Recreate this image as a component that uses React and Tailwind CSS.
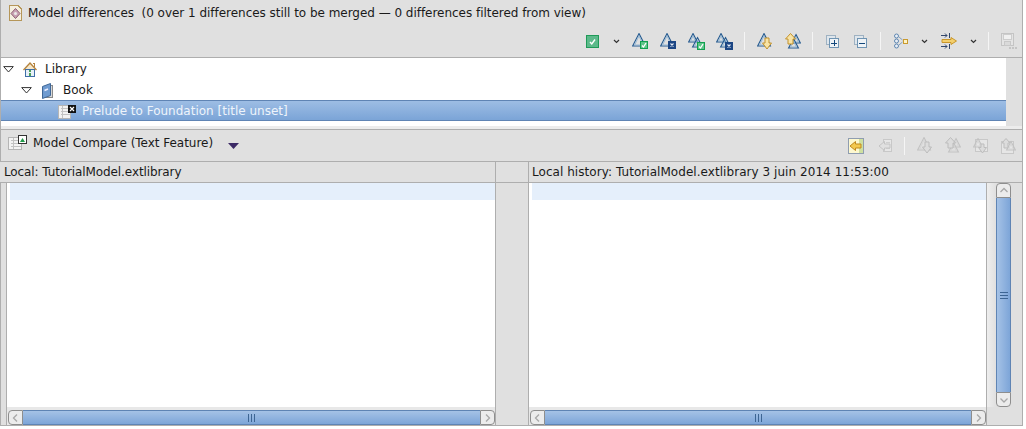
import React from "react";

const Svg = ({ w = 16, h = 16, children, className = "" }) => (
  <svg width={w} height={h} viewBox={`0 0 ${w} ${h}`} className={`shrink-0 block ${className}`} shapeRendering="crispEdges">{children}</svg>
);

const Tri = ({ x = 0, y = 0, s = 13, c = "#23598f", inner = "#8fb4d4" }) => {
  const h = s - 1;
  return (
    <g shapeRendering="auto" fill="none">
      <path d={`M${x + s / 2} ${y + 0.6}L${x + s - 0.6} ${y + h}H${x + 0.6}Z`} stroke={c} strokeWidth="1.1" />
      <path d={`M${x + s / 2} ${y + 3}L${x + s - 2.6} ${y + h - 1}H${x + 2.6}Z`} stroke={inner} strokeWidth="0.9" />
    </g>
  );
};
const Check = ({ x, y }) => (
  <g>
    <rect x={x + 0.5} y={y + 0.5} width="7" height="7" fill="#5fc48a" stroke="#12a150" />
    <path d={`M${x + 2} ${y + 4.5}l1.500 1.500 2.500-4`} fill="none" stroke="#fff" strokeWidth="1.300" shapeRendering="auto" />
  </g>
);
const Cross = ({ x, y }) => (
  <g>
    <rect x={x} y={y} width="8" height="8" fill="#1c4684" />
    <path d={`M${x + 2.500} ${y + 2.500}l3 3m0-3l-3 3`} fill="none" stroke="#e8eef8" strokeWidth="1.100" shapeRendering="auto" />
  </g>
);
const Chevron = () => (
  <Svg w={7} h={5}><path d="M1 1L3.500 3.500L6 1" fill="none" stroke="#333" strokeWidth="1.200" shapeRendering="auto" /></Svg>
);
const Sep = () => <div className="w-px h-[18px] bg-[#f5f5f5] shrink-0" />;

const CheckAll = () => (
  <Svg w={13} h={13}>
    <rect x=".5" y=".5" width="12" height="12" fill="#5cb98a" stroke="#1f9a58" />
    <path d="M4 7l1.800 2L9 4.500" fill="none" stroke="#fff" strokeWidth="1.400" shapeRendering="auto" />
  </Svg>
);
const OneCheck = () => <Svg w={17} h={17}><Tri x={0} y={0} s={14} /><Check x={8} y={8} /></Svg>;
const OneCross = () => <Svg w={17} h={17}><Tri x={0} y={0} s={14} /><Cross x={8} y={8} /></Svg>;
const TwoCheck = () => <Svg w={17} h={17}><Tri x={0} y={0} s={10} /><Tri x={4} y={4} s={11} /><Check x={9} y={9} /></Svg>;
const TwoCross = () => <Svg w={17} h={17}><Tri x={0} y={0} s={10} /><Tri x={4} y={4} s={11} /><Cross x={9} y={9} /></Svg>;

const Arrow = ({ gray, up }) => (
  <path
    d={up ? "M5.500 .5L10.500 6H8v5H3V6H.5Z" : "M8 5h4v5h2.500L10 16 5.500 10H8Z"}
    fill={gray ? "#dcdcdc" : "#f7e3a6"}
    stroke={gray ? "#bcbcbc" : "#c4922a"}
    shapeRendering="auto"
  />
);
const Down = ({ gray }) => (
  <Svg w={16} h={17}>
    {gray ? <Tri x={0} y={0} s={14} c="#c2c2c2" inner="#d4d4d4" /> : <Tri x={0} y={0} s={14} />}
    <Arrow gray={gray} />
  </Svg>
);
const Up = ({ gray }) => {
  const c = gray ? "#c2c2c2" : "#23598f";
  const i = gray ? "#d4d4d4" : "#8fb4d4";
  return (
    <Svg w={16} h={17}>
      <Tri x={6} y={1} s={10} c={c} inner={i} />
      <Tri x={3} y={5} s={11} c={c} inner={i} />
      <Arrow gray={gray} up />
    </Svg>
  );
};
const Expand = ({ minus }) => (
  <Svg w={13} h={13}>
    <rect x=".5" y=".5" width="9" height="9" fill="#dfe6ec" stroke="#9fb2c2" />
    <rect x="3.500" y="3.500" width="9" height="9" fill="#eef3f7" stroke="#6f94b3" />
    {!minus && <rect x="7.500" y="5" width="1" height="6" fill="#13487c" />}
    <rect x="5" y="7.500" width="6" height="1" fill="#13487c" />
  </Svg>
);
const Tree = () => (
  <Svg w={14} h={16}>
    <g fill="#e8eef5" stroke="#5f86b0" shapeRendering="auto">
      <circle cx="2.500" cy="3" r="2" /><circle cx="2.500" cy="8" r="2" /><circle cx="2.500" cy="13" r="2" />
    </g>
    <path d="M5 4L8.500 7M5 12L8.500 9" stroke="#7f9fc0" fill="none" shapeRendering="auto" />
    <rect x="9.500" y="6.500" width="3.500" height="3.500" fill="#fff3c4" stroke="#c99a2e" />
  </Svg>
);
const Merge = () => (
  <Svg w={16} h={16}>
    <path d="M0 2.500h6M4 .5l2 2-2 2M8.500 0v5M0 13.500h6M4 11.500l2 2-2 2M8.500 11v5" stroke="#33476b" fill="none" shapeRendering="auto" />
    <path d="M1 6.500h9V4.500L15.500 8 10 11.500v-2H1Z" fill="#f3cf6d" stroke="#c9962a" shapeRendering="auto" />
  </Svg>
);
const Save = () => (
  <Svg w={16} h={16}>
    <rect x=".5" y=".5" width="12" height="12" fill="#e4e4e4" stroke="#c4c4c4" />
    <rect x="2.500" y="1.500" width="8" height="5" fill="#f0f0f0" stroke="#cdcdcd" />
    <rect x="3.500" y="8.500" width="6" height="4" fill="#dadada" stroke="#c8c8c8" />
    <path d="M8 14h2v1.500H8zM11 14h2v1.500h-2zM14 14h2v1.500h-2z" fill="#c4c4c4" />
  </Svg>
);
const CopyLeft = ({ gray }) => (
  <Svg w={gray ? 15 : 16} h={16}>
    {!gray && <rect x=".5" y=".5" width="15" height="15" fill="#fdf8d0" stroke="#8f9db0" />}
    {!gray && <rect x="11" y="1" width="4" height="14" fill="#cfe0a0" />}
    {gray && <rect x="6.500" y="1.500" width="8" height="12" fill="#e6e6e6" stroke="#c8c8c8" />}
    {gray && <path d="M9 4.500h4M9 7.500h4M9 10.500h4" stroke="#cfcfcf" />}
    <path d="M2 8L7.500 3.500V6H13v4H7.500v2.500Z" fill={gray ? "#e0e0e0" : "#f3c94f"} stroke={gray ? "#c4c4c4" : "#c08a1e"} shapeRendering="auto" />
  </Svg>
);
const DocDown = () => (
  <Svg w={15} h={16}>
    <rect x="2.500" y="1.500" width="12" height="12" fill="#e6e6e6" stroke="#c8c8c8" />
    <Tri x={0} y={0} s={10} c="#c2c2c2" inner="#d4d4d4" />
    <path d="M8 6h3v3.500h2.500L9.500 15 5.500 9.500H8Z" fill="#dcdcdc" stroke="#bdbdbd" shapeRendering="auto" />
  </Svg>
);
const DocUp = () => (
  <Svg w={15} h={16}>
    <rect x=".5" y="3.500" width="12" height="12" fill="#e6e6e6" stroke="#c8c8c8" />
    <Tri x={5} y={3} s={10} c="#c2c2c2" inner="#d4d4d4" />
    <path d="M5 .5L9 5H7v5H3V5H1Z" fill="#dcdcdc" stroke="#bdbdbd" shapeRendering="auto" />
  </Svg>
);
const ModelIcon = () => (
  <Svg w={13} h={16}>
    <path d="M.5.5H9L12.500 4V15.500H.5Z" fill="#f5efdf" stroke="#b59659" />
    <path d="M6.500 3.500L11 8.500 6.500 13.500 2 8.500Z" fill="#c9a0b4" stroke="#8d6070" shapeRendering="auto" />
    <circle cx="6.500" cy="8.500" r="1.500" fill="#ecebe6" shapeRendering="auto" />
  </Svg>
);
const HomeIcon = () => (
  <Svg w={14} h={15}>
    <path d="M.5 8L7 1 13.500 8" fill="#f6e7c8" stroke="#b5843f" strokeWidth="1.300" shapeRendering="auto" />
    <path d="M10 1.500h1.500v3" fill="none" stroke="#b5843f" />
    <rect x="2.500" y="7.500" width="9" height="7" fill="#e7f0f8" stroke="#3f6fa8" />
    <rect x="6" y="8" width="2" height="2" fill="#4aa05a" />
    <rect x="6" y="11" width="2" height="3" fill="#4aa05a" />
  </Svg>
);
const BookIcon = () => (
  <Svg w={12} h={16}>
    <path d="M9.500 2.500h2V14.500H3" fill="#d8d8d8" stroke="#8a8a8a" />
    <path d="M1.500 3.500L9.500 .5V12.500L1.500 15.500Z" fill="#6f9bd0" stroke="#3f6797" shapeRendering="auto" />
    <path d="M3.500 7.500L7 6" stroke="#eef" strokeWidth="1.500" shapeRendering="auto" />
  </Svg>
);
const AttrIcon = () => (
  <Svg w={19} h={15}>
    <rect x=".5" y="1.500" width="12" height="13" fill="#f2f2f2" stroke="#b5b5b5" />
    <path d="M3 4.500h9M3 7.500h9M3 10.500h9M4.500 2v12" stroke="#c2c2c2" />
    <rect x="10" y="1" width="8" height="8" fill="#111" />
    <path d="M12 3l4 4m0-4l-4 4" stroke="#fff" strokeWidth="1.200" shapeRendering="auto" />
  </Svg>
);
const CompareIcon = () => (
  <Svg w={19} h={15}>
    <rect x=".5" y="2.500" width="13" height="12" fill="#f2f2f2" stroke="#b5b5b5" />
    <path d="M3 5.500h10M3 8.500h10M3 11.500h10M5.500 3v11" stroke="#c2c2c2" />
    <rect x="10.500" y=".5" width="8" height="8" fill="#fff" stroke="#333" />
    <path d="M12 7l2.500-4L17 7Z" fill="#1f9a48" shapeRendering="auto" />
  </Svg>
);

const Twist = () => (
  <Svg w={11} h={7}><path d="M.7.6H10.300L5.500 6Z" fill="#fff" stroke="#333" shapeRendering="auto" /></Svg>
);

const TreeRow = ({ indent, twist, icon, label, selected }) => (
  <div className={`flex items-center pt-[2px] ${indent} ${selected ? "h-[21px] text-[#eef4fb] bg-linear-to-b from-[#9dbde4] to-[#7ba4d7] border-y border-[#5f84b4]" : "h-[21px] text-[#1a1a1a]"}`}>
    {twist && <Twist />}
    {icon}
    <span className="whitespace-pre">{label}</span>
  </div>
);

const ThumbGrip = ({ vertical }) => {
  const bar = vertical ? "h-px w-[8px] bg-[#3d6593]" : "w-px h-[8px] bg-[#3d6593]";
  return (
    <div className={`flex gap-[2px] ${vertical ? "flex-col" : ""}`}>
      <div className={bar} /><div className={bar} /><div className={bar} />
    </div>
  );
};

const ArrowBtn = ({ dir }) => {
  const d = { left: "M6 1.500L2.500 5 6 8.500", right: "M3 1.500L6.500 5 3 8.500", up: "M1.500 6L5 2.500 8.500 6", down: "M1.500 3.500L5 7 8.500 3.500" }[dir];
  const cls = {
    left: "w-[15px] h-[15px] rounded-l-[4px] border",
    right: "w-[15px] h-[15px] rounded-r-[4px] border",
    up: "w-[15px] h-[15px] rounded-t-[4px] border",
    down: "w-[15px] h-[15px] rounded-b-[4px] border",
  }[dir];
  return (
    <div className={`${cls} border-[#8e8e8e] bg-[#ececec] flex items-center justify-center shrink-0`}>
      <svg width="9" height="10" viewBox="0 0 9 10" className="block"><path d={d} fill="none" stroke="#a8a8a8" strokeWidth="1.300" /></svg>
    </div>
  );
};

const HScroll = () => (
  <div className="h-[18px] bg-[#e8e8e8] pt-[3px] pl-px shrink-0">
    <div className="flex h-[15px]">
      <ArrowBtn dir="left" />
      <div className="flex-1 h-[15px] bg-linear-to-b from-[#a5c2e6] to-[#7da5d8] border-y border-[#5f84b4] flex items-center justify-center">
        <ThumbGrip />
      </div>
      <ArrowBtn dir="right" />
    </div>
  </div>
);

export default function App() {
  return (
    <div className="w-[1026px] h-[429px] bg-white overflow-hidden text-[12px] leading-[15px] font-['DejaVu_Sans',sans-serif] text-[#1a1a1a]">
      <div className="w-[1023px] h-[426px] bg-[#e0e0e0] flex flex-col border-b border-[#aeaeae]">
        {/* Top panel */}
        <div className="h-[58px] bg-[#e0e0e0] border-b border-x border-[#aeaeae] flex flex-col shrink-0">
          <div className="h-[26px] flex items-center pl-[8px] gap-[6px]">
            <ModelIcon />
            <span className="whitespace-pre tracking-[-0.03px]">Model differences  (0 over 1 differences still to be merged — 0 differences filtered from view)</span>
          </div>
          <div className="h-[31px] flex items-center pl-[585px] pb-[1px]">
            <CheckAll />
            <div className="ml-[14px]"><Chevron /></div>
            <div className="ml-[12px]"><OneCheck /></div>
            <div className="ml-[11px]"><OneCross /></div>
            <div className="ml-[11px]"><TwoCheck /></div>
            <div className="ml-[11px]"><TwoCross /></div>
            <div className="ml-[11px]"><Sep /></div>
            <div className="ml-[12px]"><Down /></div>
            <div className="ml-[12px]"><Up /></div>
            <div className="ml-[11px]"><Sep /></div>
            <div className="ml-[13px]"><Expand /></div>
            <div className="ml-[15px]"><Expand minus /></div>
            <div className="ml-[13px]"><Sep /></div>
            <div className="ml-[13px]"><Tree /></div>
            <div className="ml-[13px]"><Chevron /></div>
            <div className="ml-[13px]"><Merge /></div>
            <div className="ml-[13px]"><Chevron /></div>
            <div className="ml-[11px]"><Sep /></div>
            <div className="ml-[12px]"><Save /></div>
          </div>
        </div>

        {/* Tree */}
        <div className="h-[71px] border-x border-[#aeaeae] shrink-0 flex flex-col">
          <div className="h-[68px] flex shrink-0">
            <div className="w-[1005px] bg-white shrink-0">
              <TreeRow indent="pl-[2px]" twist icon={<div className="ml-[9px] mr-[8px]"><HomeIcon /></div>} label="Library" />
              <TreeRow indent="pl-[20px]" twist icon={<div className="ml-[9px] mr-[10px]"><BookIcon /></div>} label="Book" />
              <TreeRow indent="pl-[57px]" selected icon={<div className="mr-[5px]"><AttrIcon /></div>} label="Prelude to Foundation [title unset]" />
            </div>
          </div>
          <div className="flex-1 bg-[#ececec]" />
        </div>

        <div className="h-px bg-[#aeaeae] shrink-0" />

        {/* Compare header */}
        <div className="h-[32px] border-b border-x border-[#aeaeae] flex items-center pl-[7px] shrink-0">
          <div className="-translate-y-[3px]"><CompareIcon /></div>
          <span className="ml-[6px] whitespace-pre tracking-[-0.03px] -translate-y-[2px]">Model Compare (Text Feature)</span>
          <svg width="11" height="6" viewBox="0 0 11 6" className="ml-[15px] mt-[1px] block shrink-0"><path d="M0 0H11L5.500 6Z" fill="#3c2a66" /></svg>
          <div className="flex items-center ml-auto pr-[6px]">
            <CopyLeft />
            <div className="ml-[13px]"><CopyLeft gray /></div>
            <div className="ml-[12px]"><Sep /></div>
            <div className="ml-[12px]"><Down gray /></div>
            <div className="ml-[12px]"><Up gray /></div>
            <div className="ml-[12px]"><DocDown /></div>
            <div className="ml-[13px]"><DocUp /></div>
          </div>
        </div>

        {/* Compare body */}
        <div className="flex-1 flex min-h-0">
          <div className="w-[496px] flex flex-col shrink-0 border-r border-[#aeaeae]">
            <div className="h-[21px] border-b border-[#aeaeae] pl-[4px] flex items-center shrink-0 tracking-[-0.1px]">Local: TutorialModel.extlibrary</div>
            <div className="flex-1 min-h-0 flex">
              <div className="w-[7px] border-x border-[#aeaeae] shrink-0" />
              <div className="flex-1 min-w-0 flex flex-col">
                <div className="flex-1 pl-[3px] bg-white"><div className="h-[17px] bg-[#e5effb]" /></div>
                <HScroll />
              </div>
            </div>
          </div>
          <div className="w-[33px] flex flex-col shrink-0 border-r border-[#aeaeae]">
            <div className="h-[21px] border-b border-[#aeaeae] shrink-0" />
          </div>
          <div className="flex-1 flex flex-col min-w-0 border-r border-[#aeaeae]">
            <div className="h-[21px] border-b border-[#aeaeae] pl-[3px] flex items-center shrink-0 tracking-[0.05px]">Local history: TutorialModel.extlibrary 3 juin 2014 11:53:00</div>
            <div className="flex-1 flex min-h-0">
              <div className="w-[458px] flex flex-col shrink-0 border-r border-[#aeaeae]">
                <div className="flex-1 bg-white pl-[3px]"><div className="h-[17px] bg-[#e5effb]" /></div>
                <HScroll />
              </div>
              <div className="w-[9px] bg-linear-to-r from-[#eeeeee] to-[#e0e0e0] shrink-0 mb-[18px]" />
              <div className="w-[15px] flex flex-col shrink-0 mb-[18px]">
                <ArrowBtn dir="up" />
                <div className="flex-1 bg-linear-to-r from-[#a5c2e6] to-[#7da5d8] border-x border-[#5f84b4] flex items-center justify-center"><ThumbGrip vertical /></div>
                <ArrowBtn dir="down" />
              </div>
            </div>
          </div>
        </div>
      </div>
    </div>
  );
}
